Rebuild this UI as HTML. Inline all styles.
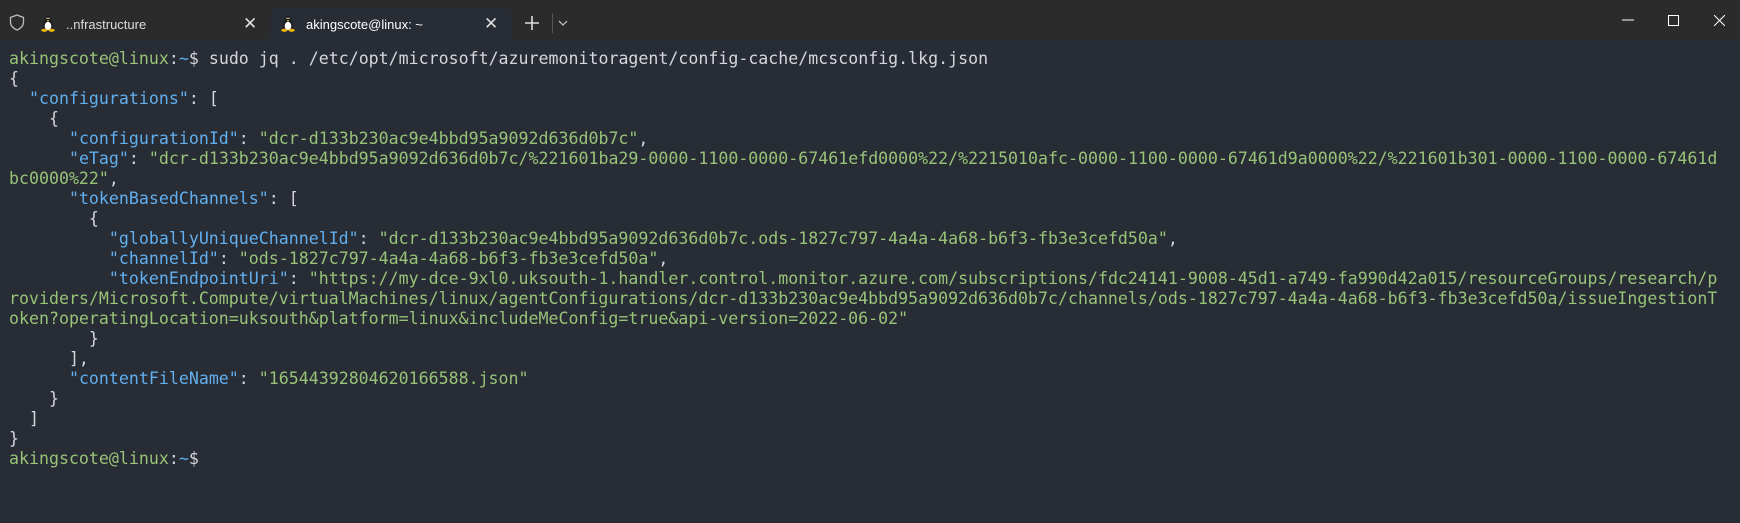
<!DOCTYPE html>
<html><head><meta charset="utf-8"><style>
html,body{margin:0;padding:0;width:1740px;height:523px;overflow:hidden;background:#282c34;}
.bar{position:absolute;left:0;top:0;width:1740px;height:39px;background:#2b2b2b;}
.tab{position:absolute;top:8px;height:31px;font:13px "Liberation Sans",sans-serif;color:#ddd;}
.tab.active{background:#282c34;border-radius:7px 7px 0 0;color:#fff;}
.t{position:absolute;top:9px;}
.x{position:absolute;top:6px;font-size:17px;color:#ddd;}
pre{position:absolute;left:9px;top:49px;margin:0;font:16.6px/20px "DejaVu Sans Mono","Liberation Mono",monospace;color:#d4d7dd;}
.g{color:#98c379}.b{color:#61afef}
</style></head><body>
<div class="bar">
<svg style="position:absolute;left:9px;top:14px" width="16" height="17" viewBox="0 0 16 17"><path d="M8 1 L14.5 3.5 V8 C14.5 12 11.5 14.5 8 16 C4.5 14.5 1.5 12 1.5 8 V3.5 Z" fill="none" stroke="#bbb" stroke-width="1.3"/></svg>
<div class="tab" style="left:30px;width:240px;">
<svg style="position:absolute;left:11px;top:6px" width="14" height="18" viewBox="0 0 14 18"><ellipse cx="7" cy="5" rx="3" ry="3.6" fill="#1a1a1a"/><ellipse cx="7" cy="11.5" rx="4.8" ry="5.5" fill="#1a1a1a"/><ellipse cx="7" cy="12" rx="3.3" ry="4.3" fill="#fff"/><circle cx="6" cy="4.3" r="0.7" fill="#fff"/><circle cx="8" cy="4.3" r="0.7" fill="#fff"/><path d="M5.6 6 L8.4 6 L7 7.6Z" fill="#f0b400"/><ellipse cx="3.3" cy="16.3" rx="3" ry="1.6" fill="#f0b400"/><ellipse cx="10.7" cy="16.3" rx="3" ry="1.6" fill="#f0b400"/></svg>
<span class="t" style="left:36px">..nfrastructure</span><span class="x" style="left:213px">✕</span></div>
<div class="tab active" style="left:270px;width:242px;">
<svg style="position:absolute;left:11px;top:6px" width="14" height="18" viewBox="0 0 14 18"><ellipse cx="7" cy="5" rx="3" ry="3.6" fill="#1a1a1a"/><ellipse cx="7" cy="11.5" rx="4.8" ry="5.5" fill="#1a1a1a"/><ellipse cx="7" cy="12" rx="3.3" ry="4.3" fill="#fff"/><circle cx="6" cy="4.3" r="0.7" fill="#fff"/><circle cx="8" cy="4.3" r="0.7" fill="#fff"/><path d="M5.6 6 L8.4 6 L7 7.6Z" fill="#f0b400"/><ellipse cx="3.3" cy="16.3" rx="3" ry="1.6" fill="#f0b400"/><ellipse cx="10.7" cy="16.3" rx="3" ry="1.6" fill="#f0b400"/></svg>
<span class="t" style="left:36px">akingscote@linux: ~</span><span class="x" style="left:214px">✕</span></div>
<svg style="position:absolute;left:525px;top:16px" width="14" height="14"><path d="M7 0V14M0 7H14" stroke="#ddd" stroke-width="1.6"/></svg>
<div style="position:absolute;left:552px;top:13px;width:1px;height:20px;background:#555"></div>
<svg style="position:absolute;left:558px;top:20px" width="10" height="6"><path d="M1 1L5 5L9 1" stroke="#ccc" fill="none" stroke-width="1.2"/></svg>
<svg style="position:absolute;left:1622px;top:19px" width="12" height="2"><path d="M0 1H12" stroke="#fff"/></svg>
<svg style="position:absolute;left:1668px;top:15px" width="11" height="11"><rect x="0.5" y="0.5" width="10" height="10" fill="none" stroke="#fff"/></svg>
<svg style="position:absolute;left:1714px;top:15px" width="11" height="11"><path d="M0 0L11 11M11 0L0 11" stroke="#fff"/></svg>
</div>
<pre><span class="g">akingscote@linux</span>:<span class="b">~</span>$ sudo jq . /etc/opt/microsoft/azuremonitoragent/config-cache/mcsconfig.lkg.json
{
  <span class="b">"configurations"</span>: [
    {
      <span class="b">"configurationId"</span>: <span class="g">"dcr-d133b230ac9e4bbd95a9092d636d0b7c"</span>,
      <span class="b">"eTag"</span>: <span class="g">"dcr-d133b230ac9e4bbd95a9092d636d0b7c/%221601ba29-0000-1100-0000-67461efd0000%22/%2215010afc-0000-1100-0000-67461d9a0000%22/%221601b301-0000-1100-0000-67461d
bc0000%22"</span>,
      <span class="b">"tokenBasedChannels"</span>: [
        {
          <span class="b">"globallyUniqueChannelId"</span>: <span class="g">"dcr-d133b230ac9e4bbd95a9092d636d0b7c.ods-1827c797-4a4a-4a68-b6f3-fb3e3cefd50a"</span>,
          <span class="b">"channelId"</span>: <span class="g">"ods-1827c797-4a4a-4a68-b6f3-fb3e3cefd50a"</span>,
          <span class="b">"tokenEndpointUri"</span>: <span class="g">"https://my-dce-9xl0.uksouth-1.handler.control.monitor.azure.com/subscriptions/fdc24141-9008-45d1-a749-fa990d42a015/resourceGroups/research/p
roviders/Microsoft.Compute/virtualMachines/linux/agentConfigurations/dcr-d133b230ac9e4bbd95a9092d636d0b7c/channels/ods-1827c797-4a4a-4a68-b6f3-fb3e3cefd50a/issueIngestionT
oken?operatingLocation=uksouth&amp;platform=linux&amp;includeMeConfig=true&amp;api-version=2022-06-02"</span>
        }
      ],
      <span class="b">"contentFileName"</span>: <span class="g">"16544392804620166588.json"</span>
    }
  ]
}
<span class="g">akingscote@linux</span>:<span class="b">~</span>$</pre>
</body></html>
